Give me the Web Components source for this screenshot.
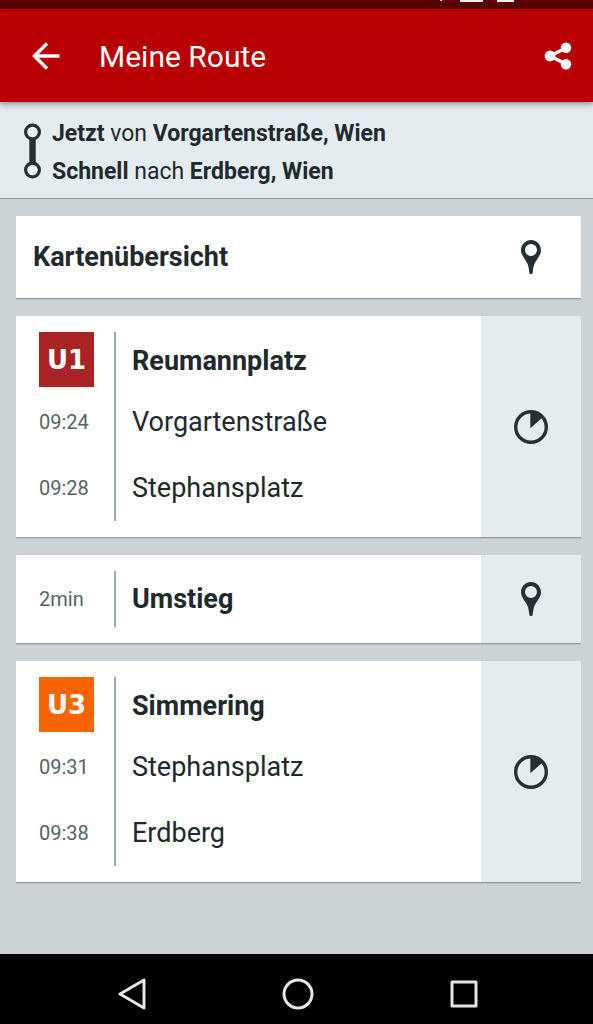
<!DOCTYPE html>
<html lang="de">
<head>
<meta charset="utf-8">
<meta name="viewport" content="width=device-width, initial-scale=1">
<title>Meine Route</title>
<style>
  body { margin: 0; font-family: Roboto, "Liberation Sans", sans-serif; color: #20292d; }
</style>
</head>
<body>
<route-app>
  <status-bar></status-bar>
  <app-bar>Meine Route</app-bar>
  <trip-summary>
    <span slot="from"><b>Jetzt</b> von <b>Vorgartenstraße, Wien</b></span>
    <span slot="to"><b>Schnell</b> nach <b>Erdberg, Wien</b></span>
  </trip-summary>
  <map-card slot="card">Kartenübersicht</map-card>
  <leg-card slot="card" icon="clock" label="Fahrplan">
    <leg-row kind="head"><line-badge slot="time" style="--badge:#a92325">U1</line-badge>Reumannplatz</leg-row>
    <leg-row><time slot="time">09:24</time>Vorgartenstraße</leg-row>
    <leg-row><time slot="time">09:28</time>Stephansplatz</leg-row>
  </leg-card>
  <leg-card slot="card" icon="pin" label="Karte">
    <leg-row kind="change"><span slot="time">2min</span>Umstieg</leg-row>
  </leg-card>
  <leg-card slot="card" icon="clock" label="Fahrplan">
    <leg-row kind="head"><line-badge slot="time" style="--badge:#f96302">U3</line-badge>Simmering</leg-row>
    <leg-row><time slot="time">09:31</time>Stephansplatz</leg-row>
    <leg-row><time slot="time">09:38</time>Erdberg</leg-row>
  </leg-card>
  <nav-bar slot="nav"></nav-bar>
</route-app>

<script>
const pin = `<svg width="20" height="34" viewBox="0 0 20 34" aria-hidden="true"><path fill="#263034" fill-rule="evenodd" d="M10 0C4.400 0 0 4.500 0 10.200C0 15.500 4.800 19.500 6.700 24.300C7.700 27.200 8.100 30.500 8.400 33C8.600 34.300 11.400 34.300 11.600 33C11.900 30.500 12.300 27.200 13.300 24.300C15.200 19.500 20 15.500 20 10.200C20 4.500 15.600 0 10 0ZM10 4A6 6 0 1 1 10 16A6 6 0 1 1 10 4Z"/></svg>`;
const clock = `<svg width="34" height="34" viewBox="0 0 34 34" aria-hidden="true"><circle cx="17" cy="17" r="15.300" fill="none" stroke="#263034" stroke-width="3.400"/><path fill="#263034" d="M16.300 18.300V2A15 15 0 0 1 28.500 7.500Z"/></svg>`;

function define(name, html) {
  customElements.define(name, class extends HTMLElement {
    constructor() {
      super();
      this.attachShadow({ mode: 'open' }).innerHTML =
        typeof html === 'function' ? html(this) : html;
    }
  });
}

define('status-bar', `<style>
  :host { display: flex; justify-content: flex-end; gap: 14px; height: 9px; padding-right: 79px; background: #5c0300; }
  i { width: 17px; height: 2px; background: #eee; }
  i:first-of-type { width: 2px; height: 1px; margin-right: 4px; }
  i:nth-of-type(2) { width: 23px; }
</style><i></i><i></i><i></i>`);

define('app-bar', `<style>
  :host { display: flex; align-items: center; height: 93px; padding: 0 16px; background: #b80002; color: #fff;
    position: relative; box-shadow: 0 2px 6px #26303480; }
  button { display: grid; place-items: center; width: 60px; height: 60px; padding: 0; border: 0; background: none; flex: none; }
  .share { margin-right: -11px; }
  h1 { flex: 1; margin: 0 0 0 23px; padding-top: 3px; font-size: 30px; font-weight: 400; line-height: 36px; }
  svg { display: block; }
</style>
<button aria-label="Zurück"><svg width="28" height="28" viewBox="0 0 28 28"><path d="M15 1.500L2.500 14L15 26.500M3 14H27.500" fill="none" stroke="#fff" stroke-width="3.400"/></svg></button>
<h1><slot></slot></h1>
<button class="share" aria-label="Teilen"><svg width="28" height="28" viewBox="0 0 28 28"><path d="M22 6L6 14L22 22" fill="none" stroke="#fff" stroke-width="3.600"/><g fill="#fff"><circle cx="22" cy="5.800" r="5.200"/><circle cx="6" cy="14" r="5.400"/><circle cx="22" cy="22.200" r="5.200"/></g></svg></button>`);

define('trip-summary', `<style>
  :host { display: flex; align-items: center; gap: 11px; padding: 13px 24px 7px; background: #e5ecef;
    border-bottom: 1px solid #92999b; font-size: 23px; line-height: 38px; font-weight: 400; }
  p { margin: 0; }
</style>
<svg width="17" height="60" viewBox="0 0 17 60" aria-hidden="true"><path d="M8.500 16V40" stroke="#263034" stroke-width="6.400"/><g fill="#f1f5f6" stroke="#263034" stroke-width="3.200"><circle cx="8.500" cy="9" r="6.900"/><circle cx="8.500" cy="47" r="6.900"/></g></svg>
<div><p><slot name="from"></slot></p><p><slot name="to"></slot></p></div>`);

define('map-card', `<style>
  :host { display: block; background: #fff; border-bottom: 1px solid #999c9e; box-shadow: 0 1px #b7bcbf; }
  button { display: flex; align-items: center; width: 100%; height: 82px; padding: 0 0 0 17px; border: 0; background: none;
    font: bold 27px/32px Roboto, sans-serif; color: inherit; text-align: left; }
  .label { flex: 1; }
  .icon { display: grid; place-items: center; width: 100px; }
</style>
<button><span class="label"><slot></slot></span><span class="icon">${pin}</span></button>`);

define('leg-card', el => `<style>
  :host { display: flex; background: #fff; border-bottom: 1px solid #999c9e; box-shadow: 0 1px #b7bcbf; }
  .rows { flex: 1; padding: 16px 0 16px 23px; }
  button { display: grid; place-items: center; width: 100px; padding: 0; border: 0; background: #e5ecef; }
</style>
<div class="rows"><slot></slot></div>
<button aria-label="${el.getAttribute('label')}">${el.getAttribute('icon') === 'pin' ? pin : clock}</button>`);

define('leg-row', `<style>
  :host { display: flex; height: 66px; font-size: 27px; line-height: 32px; }
  :host([kind]) { font-weight: 700; }
  :host([kind="head"]) { height: 57px; }
  :host([kind="change"]) { height: 56px; }
  .time { display: flex; align-items: center; width: 75px; border-right: 2px solid #9aabb3;
    font-size: 20px; font-weight: 400; color: #546469; }
  :host([kind="head"]) .time { align-items: flex-start; }
  .name { display: flex; align-items: center; padding-left: 16px; }
</style>
<div class="time"><slot name="time"></slot></div><div class="name"><slot></slot></div>`);

define('line-badge', `<style>
  :host { display: grid; place-items: center; width: 55px; height: 55px; background: var(--badge); color: #fff;
    font: bold 26px/32px "DejaVu Sans", sans-serif; }
</style><slot></slot>`);

define('nav-bar', `<style>
  :host { display: flex; justify-content: center; height: 70px; padding-left: 3px; background: #000; }
  button { display: grid; place-items: center; flex: 0 1 166px; padding: 10px 0 0; border: 0; background: none; }
  svg { fill: none; stroke: #e6e6e6; stroke-width: 3; stroke-linejoin: round; }
</style>
<button aria-label="Zurück"><svg width="32" height="32" viewBox="0 0 32 32"><path d="M28 2V30L4 16Z"/></svg></button>
<button aria-label="Startseite"><svg width="32" height="32" viewBox="0 0 32 32"><circle cx="16" cy="16" r="14"/></svg></button>
<button aria-label="Übersicht"><svg width="32" height="32" viewBox="0 0 32 32"><path d="M4 4H28V28H4Z"/></svg></button>`);

define('route-app', `<style>
  :host { display: flex; flex-direction: column; min-height: 100vh; background: #cbd3d7; }
  main { flex: 1; display: flex; flex-direction: column; gap: 17px; padding: 17px 12px 17px 16px; }
</style>
<slot></slot><main><slot name="card"></slot></main><slot name="nav"></slot>`);
</script>
</body>
</html>
